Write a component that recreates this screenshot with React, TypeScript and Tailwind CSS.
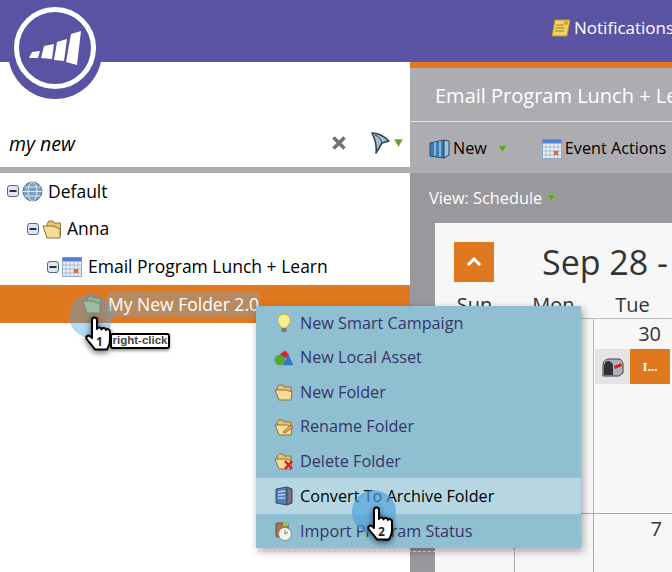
const font = "font-['Open_Sans',sans-serif]";

function MinusBox() {
  return (
    <svg width="12" height="12" viewBox="0 0 12 12" className="shrink-0">
      <rect x="0.5" y="0.5" width="11" height="11" rx="2.500" fill="#dfe6ee" stroke="#56677e" />
      <rect x="2.500" y="5" width="7" height="2" fill="#243349" />
    </svg>
  );
}

function Globe() {
  return (
    <svg width="21" height="21" viewBox="0 0 21 21" className="shrink-0">
      <circle cx="10.5" cy="10.5" r="9.5" fill="#7f9fc0" stroke="#54708f" />
      <ellipse cx="10.5" cy="10.5" rx="4.5" ry="9.5" fill="none" stroke="#dce7f2" />
      <path d="M1 10.5h19M2.500 6h16M2.500 15h16" stroke="#dce7f2" fill="none" />
    </svg>
  );
}

function Folder({ fill = "#f5dc98", back = "#e6c46e" }: { fill?: string; back?: string }) {
  return (
    <svg width="20" height="20" viewBox="0 0 20 20" className="shrink-0">
      <path d="M5 5l2-3h4l1 2h6.500v13H7z" fill={back} stroke="#8f7438" />
      <path d="M1 7h10l7 3v9H5z" fill={fill} stroke="#8f7438" strokeLinejoin="round" />
    </svg>
  );
}

function Calendar({ size = 20 }: { size?: number }) {
  return (
    <svg width={size} height={size} viewBox="0 0 20 20" className="shrink-0">
      <rect x="0.5" y="0.5" width="19" height="19" fill="#eef1f7" stroke="#8ea4c9" />
      <rect x="0.5" y="0.5" width="19" height="4" fill="#4f82d6" />
      <path d="M0 8h20M0 12h20M0 16h20M4 5v15M8 5v15M12 5v15M16 5v15" stroke="#a9b6cf" />
      <rect x="12" y="12" width="4" height="4" fill="#e0682c" />
    </svg>
  );
}

function Triangle() {
  return (
    <svg width="9" height="8" viewBox="0 0 9 8" className="shrink-0">
      <path d="M0.5 0.5h8L4.5 7.5z" fill="#5da32a" stroke="#8bc45a" strokeWidth="0.8" />
    </svg>
  );
}

function Hand({ n }: { n: number }) {
  return (
    <div className="relative w-[30px] h-[38px]">
      <svg width="30" height="38" viewBox="0 0 30 38" className="drop-shadow-[0_2px_3px_rgba(0,0,0,0.6)]">
        <path
          d="M8 4c0-3.500 5-3.500 5 0v9c.5-2 4-2 4.500.5.5-2 4-2 4.500.5.5-1.500 4-1 4 1.500v9c0 4-2 7-3 9H11c-2-3-5-6-8-10-2-3 1-5 3.500-3L8 22z"
          fill="#fff"
          stroke="#000"
          strokeWidth="2"
          strokeLinejoin="round"
        />
      </svg>
      <span className={`absolute left-[12px] top-[20px] text-[12px] font-bold leading-none text-[#222] ${font}`}>{n}</span>
    </div>
  );
}

function Bulb() {
  return (
    <svg width="18" height="20" viewBox="0 0 18 20">
      <path d="M9 1a6.500 6.500 0 0 0-4 11.500c1 1 1.500 2 1.500 2.500h5c0-.5.5-1.500 1.500-2.500A6.500 6.500 0 0 0 9 1z" fill="#f6ee8e" stroke="#b9ae55" />
      <rect x="6.500" y="15" width="5" height="4" rx="1" fill="#77777a" />
    </svg>
  );
}

function Shapes() {
  return (
    <svg width="21" height="18" viewBox="0 0 21 18">
      <path d="M6 5l6-4 4 5-6 4z" fill="#d02a2a" />
      <path d="M15 5l5.500 11.500H9z" fill="#2f78c4" />
      <circle cx="6" cy="11" r="5.500" fill="#55a82e" />
    </svg>
  );
}

function OpenFolder({ mark }: { mark?: "pen" | "x" }) {
  return (
    <svg width="20" height="20" viewBox="0 0 20 20">
      <path d="M3 5l2-2h4l1 2h7v12H5z" fill="#e6c46e" stroke="#8f7438" />
      <path d="M1 8h12l5 2-1 8H5z" fill="#f5dc98" stroke="#8f7438" strokeLinejoin="round" />
      {mark === "pen" && <path d="M9 15l8-7 2 2-8 6z" fill="#e2b93b" stroke="#a5303a" strokeWidth="0.700" />}
      {mark === "x" && <path d="M11 10l7 8M18 10l-7 8" stroke="#d3222a" strokeWidth="2.500" />}
    </svg>
  );
}

function Archive() {
  return (
    <svg width="18" height="20" viewBox="0 0 18 20">
      <path d="M1 3l11-2v18L1 17z" fill="#4d7fb8" stroke="#35506f" />
      <path d="M12 1l5 2v14l-5 2z" fill="#70747c" stroke="#44484e" />
      <path d="M3 6l7-1M3 9l7-.5M3 12l7 0" stroke="#b9d4ee" strokeWidth="1.400" />
    </svg>
  );
}

function Import() {
  return (
    <svg width="20" height="20" viewBox="0 0 20 20">
      <rect x="2" y="2" width="12" height="14" rx="1" fill="#a8754e" stroke="#6f4c33" />
      <rect x="9" y="0" width="5" height="5" fill="#7fcf5a" />
      <circle cx="11" cy="13" r="6.500" fill="#f1f1ee" stroke="#8a8a86" />
      <path d="M11 13l3-2M11 13v-4" stroke="#777" />
    </svg>
  );
}

function Box() {
  return (
    <svg width="21" height="21" viewBox="0 0 21 21" className="shrink-0">
      <path d="M1 5l14-3v18L1 18z" fill="#3d7cb4" stroke="#234a70" />
      <path d="M15 2l5 1v14l-5 3z" fill="#9fc3de" stroke="#234a70" />
      <path d="M6 4v14M11 3v16" stroke="#bcd8ee" strokeWidth="1.200" />
    </svg>
  );
}

function Notepad() {
  return (
    <svg width="20" height="18" viewBox="0 0 20 18" className="shrink-0">
      <path d="M4 1h15l-3 16H1z" fill="#f2d35f" stroke="#b8962f" />
      <path d="M5 6h8M4.500 9h9M4 12h9" stroke="#9a8230" />
      <circle cx="15" cy="4" r="2" fill="#e88a3c" />
    </svg>
  );
}

function Mailbox() {
  return (
    <svg width="22" height="20" viewBox="0 0 22 20">
      <path d="M1 8c0-4 3-6 6-6h9c3 0 5 2 5 6v8l-4 3H1z" fill="#aeb2b8" stroke="#3c4046" />
      <path d="M2 18V9c0-3 2-5 4-5s5 2 5 5v9z" fill="#2f3338" />
      <path d="M12 9l7-3 1 3-7 3z" fill="#d5222a" />
    </svg>
  );
}

const menuItems = [
  { label: "New Smart Campaign", icon: <Bulb />, h: "h-[34px]" },
  { label: "New Local Asset", icon: <Shapes />, h: "h-[35px]" },
  { label: "New Folder", icon: <OpenFolder />, h: "h-[34px]" },
  { label: "Rename Folder", icon: <OpenFolder mark="pen" />, h: "h-[35px]" },
  { label: "Delete Folder", icon: <OpenFolder mark="x" />, h: "h-[34px]" },
  { label: "Convert To Archive Folder", icon: <Archive />, h: "h-[36px]", active: true },
  { label: "Import Program Status", icon: <Import />, h: "h-[34px]" },
];

export default function App() {
  return (
    <div className={`relative w-[672px] h-[572px] overflow-hidden bg-white ${font}`}>
      {/* top bar */}
      <div className="h-[62px] bg-[#5a53a3] flex justify-end items-center whitespace-nowrap overflow-hidden">
        <div className="flex items-center gap-[3px] w-[121px] text-white text-[17px] font-medium -mt-[6px]">
          <Notepad />
          <span>Notifications</span>
        </div>
      </div>

      <div className="flex h-[510px]">
        {/* left tree panel */}
        <div className="w-[410px] shrink-0 flex flex-col">
          <div className="h-[105px] flex items-end justify-between pb-[10px] pl-[9px] pr-[7px]">
            <span className="italic text-[19.500px] text-black leading-[26px]">my new</span>
            <div className="flex items-center gap-[24px] mb-[3px]">
              <svg width="16" height="16" viewBox="0 0 16 16">
                <path d="M2.500 2.500l11 11M13.500 2.500l-11 11" stroke="#6f6f6f" strokeWidth="3.500" />
              </svg>
              <div className="flex items-center gap-[4px]">
                <svg width="19" height="22" viewBox="0 0 19 22">
                  <path d="M1 1c6 0 12 3 17 8l-7 2-6 10c1-7-1-14-4-20z" fill="#a9bccd" stroke="#2e4358" strokeWidth="1.600" strokeLinejoin="round" />
                  <path d="M4 3c3 1 6 4 7 8" stroke="#2e4358" fill="none" />
                </svg>
                <Triangle />
              </div>
            </div>
          </div>
          <div className="h-[6px] bg-[#adacb0]" />
          <div className="flex flex-col text-[17.500px] text-black">
            <div className="h-[36px] flex items-center gap-[3px] pl-[7px]">
              <MinusBox />
              <Globe />
              <span className="ml-[2px]">Default</span>
            </div>
            <div className="h-[39px] flex items-center gap-[3px] pl-[27px]">
              <MinusBox />
              <Folder />
              <span className="ml-[2px]">Anna</span>
            </div>
            <div className="h-[37px] flex items-center gap-[3px] pl-[47px]">
              <MinusBox />
              <Calendar />
              <span className="ml-[3px]">Email Program Lunch + Learn</span>
            </div>
            <div className="h-[38px] flex items-center gap-[3px] pl-[82px] bg-[#e07820] text-white">
              <Folder fill="#dcc873" back="#cfb45e" />
              <span className="ml-[2px] bg-[#b98a60] px-[1px] leading-[25px]">My New Folder 2.0</span>
            </div>
          </div>
        </div>

        {/* right content */}
        <div className="flex-1 min-w-0 flex flex-col">
          <div className="h-[6px] bg-[#e07820] shrink-0" />
          <div className="h-[54px] shrink-0 bg-[#adacb0] border-b border-[#e6e6e8] flex items-center pt-[2px] pl-[25px] text-white text-[20px] font-medium whitespace-nowrap">
            Email Program Lunch + Learn
          </div>
          <div className="h-[51px] shrink-0 bg-[#adacb0] flex items-center pt-[2px] pl-[19px] text-[16.200px] text-black whitespace-nowrap">
            <Box />
            <span className="ml-[3px]">New</span>
            <span className="ml-[11px]"><Triangle /></span>
            <span className="ml-[35px]"><Calendar /></span>
            <span className="ml-[3px]">Event Actions</span>
          </div>
          <div className="flex-1 bg-[#99989d] pl-[25px] flex flex-col min-h-0">
            <div className="h-[50px] shrink-0 -ml-[6px] flex items-center gap-[5px] text-white text-[16.300px] font-medium">
              <span>View: Schedule</span>
              <Triangle />
            </div>
            <div className="flex-1 bg-[#f7f7f7] flex flex-col min-h-0 overflow-hidden">
              <div className="h-[59px] shrink-0 flex items-end pl-[19px]">
                <div className="w-[40px] h-[40px] shrink-0 bg-[#e07820] flex items-center justify-center">
                  <svg width="16" height="10" viewBox="0 0 16 10">
                    <path d="M2 8l6-6 6 6" fill="none" stroke="#fff" strokeWidth="3" />
                  </svg>
                </div>
                <span className="ml-[48px] text-[34px] leading-[40px] text-[#333] whitespace-nowrap">Sep 28 - Oct 4</span>
              </div>
              <div className="h-[37px] shrink-0 flex items-end text-[20px] leading-[26px] text-[#333] border-b border-[#bbb]">
                <span className="w-[79px] text-center">Sun</span>
                <span className="w-[79px] text-center">Mon</span>
                <span className="w-[79px] text-center">Tue</span>
              </div>
              <div className="h-[195px] shrink-0 flex border-b border-[#aaa]">
                <div className="w-[159px] border-r border-[#bbb]" />
                <div className="flex-1 flex flex-col">
                  <div className="text-right pr-[11px] text-[20px] text-[#333] leading-[30px]">30</div>
                  <div className="flex h-[35px] ml-[1px] mr-[2px]">
                    <div className="w-[35px] bg-[#e4e4e4] flex items-center justify-center"><Mailbox /></div>
                    <div className="flex-1 bg-[#e07820] text-white text-[13px] font-bold flex items-center justify-center font-['Liberation_Serif',serif]">I...</div>
                  </div>
                </div>
              </div>
              <div className="flex-1 flex">
                <div className="w-[80px] border-r border-[#aaa]" />
                <div className="w-[79px] border-r border-[#aaa]" />
                <div className="flex-1 text-right pr-[10px] text-[20px] text-[#333] leading-[30px]">7</div>
              </div>
            </div>
          </div>
        </div>
      </div>

      {/* logo */}
      <div className="absolute left-[8px] top-[-5px] w-[94px] h-[104px] rounded-full bg-[#5a53a3] flex items-center justify-center">
        <div className="w-[82px] h-[82px] rounded-full border-[5px] border-white flex items-center justify-center mt-[1px]">
          <svg width="52" height="34" viewBox="0 0 52 34">
            <path d="M0 27l3-6 8-1-2 7zM12 27l3-12 10-2-2 15zM25 29l3-18 10-3-3 22zM37 31l5-28 10-3-4 34z" fill="#fff" />
          </svg>
        </div>
      </div>

      {/* context menu */}
      <div className="absolute left-[258px] top-[551px] w-[328px] border-t border-dashed border-[#e8e8e8]" />
      <div className="absolute left-[256px] top-[306px] w-[325px] bg-[#8fbfd0] shadow-[2px_3px_8px_rgba(0,0,0,0.35)] text-[16.200px] text-[#35356b] whitespace-nowrap">
        {menuItems.map((item) => (
          <div key={item.label} className={`${item.h} flex items-center pl-[18px] gap-[6px] ${item.active ? "bg-[#b6d7e2] text-black" : ""}`}>
            <span className="w-[20px] flex justify-center">{item.icon}</span>
            <span>{item.label}</span>
          </div>
        ))}
      </div>

      {/* click markers */}
      <div className="absolute left-[69px] top-[294px] w-[44px] h-[44px] rounded-full bg-[#46a2e6]/40" />
      <div className="absolute left-[352px] top-[490px] w-[44px] h-[44px] rounded-full bg-[#4f9fdc]/65" />
      <div className="absolute left-[84px] top-[316px]"><Hand n={1} /></div>
      <div className="absolute left-[366px] top-[506px]"><Hand n={2} /></div>
      <div className="absolute left-[110px] top-[333px] h-[16px] w-[60px] flex items-center justify-center bg-white border-2 border-black rounded-[3px] text-[11.500px] text-[#444] font-['Liberation_Sans',sans-serif] font-bold whitespace-nowrap shadow-[0_2px_3px_rgba(0,0,0,0.4)]">
        right-click
      </div>
    </div>
  );
}
